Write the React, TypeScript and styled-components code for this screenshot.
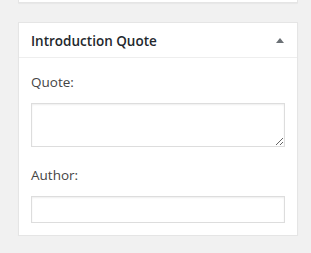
import React from "react";
import styled, { createGlobalStyle } from "styled-components";

const GlobalStyle = createGlobalStyle`
  body {
    margin: 0;
    background: #f1f1f1;
    font-family: "Open Sans", "Noto Sans", sans-serif;
  }
`;

const Column = styled.div`
  display: flex;
  flex-direction: column;
  gap: 19px;
  padding-left: 18px;
  width: 280px;
`;

const StubBox = styled.div`
  height: 2px;
  background: #fff;
  border: 1px solid #e5e5e5;
  border-top: none;
  box-shadow: 0 1px 1px rgba(0, 0, 0, 0.04);
`;

const Postbox = styled.div`
  background: #fff;
  border: 1px solid #e5e5e5;
  box-shadow: 0 1px 1px rgba(0, 0, 0, 0.04);
`;

const Header = styled.div`
  display: flex;
  align-items: center;
  justify-content: space-between;
  height: 35px;
  padding: 1px 13px 0 12px;
  box-sizing: border-box;
  border-bottom: 1px solid #eee;
`;

const Title = styled.h2`
  margin: 0;
  font-size: 13.5px;
  font-weight: 600;
  color: #23282d;
`;

const Inside = styled.div`
  display: flex;
  flex-direction: column;
  padding: 14px 12px 12px;
`;

const Label = styled.label`
  display: block;
  font-size: 13.5px;
  line-height: 20px;
  color: #444;
  margin-bottom: 11px;
`;

const Field = styled.div<{ $gap?: number }>`
  display: flex;
  flex-direction: column;
  margin-top: ${(p) => p.$gap ?? 0}px;
`;

const TextArea = styled.textarea`
  display: block;
  box-sizing: border-box;
  width: 100%;
  height: 44px;
  margin: 0;
  border: 1px solid #ddd;
  box-shadow: inset 0 1px 2px rgba(0, 0, 0, 0.07);
  background: #fff;
  font-family: inherit;
  font-size: 14px;
`;

const Input = styled.input`
  display: block;
  box-sizing: border-box;
  width: 100%;
  height: 27px;
  margin: 0;
  border: 1px solid #ddd;
  box-shadow: inset 0 1px 2px rgba(0, 0, 0, 0.07);
  background: #fff;
  font-family: inherit;
  font-size: 14px;
`;

const Toggle = () => (
  <svg width="8" height="5" viewBox="0 0 8 5">
    <polygon points="4,0 8,5 0,5" fill="#6b7075" />
  </svg>
);

export default function App() {
  return (
    <>
      <GlobalStyle />
      <Column>
        <StubBox />
        <Postbox>
          <Header>
            <Title>Introduction Quote</Title>
            <Toggle />
          </Header>
          <Inside>
            <Field>
              <Label htmlFor="quote">Quote:</Label>
              <TextArea id="quote" />
            </Field>
            <Field $gap={18}>
              <Label htmlFor="author">Author:</Label>
              <Input id="author" type="text" />
            </Field>
          </Inside>
        </Postbox>
      </Column>
    </>
  );
}
